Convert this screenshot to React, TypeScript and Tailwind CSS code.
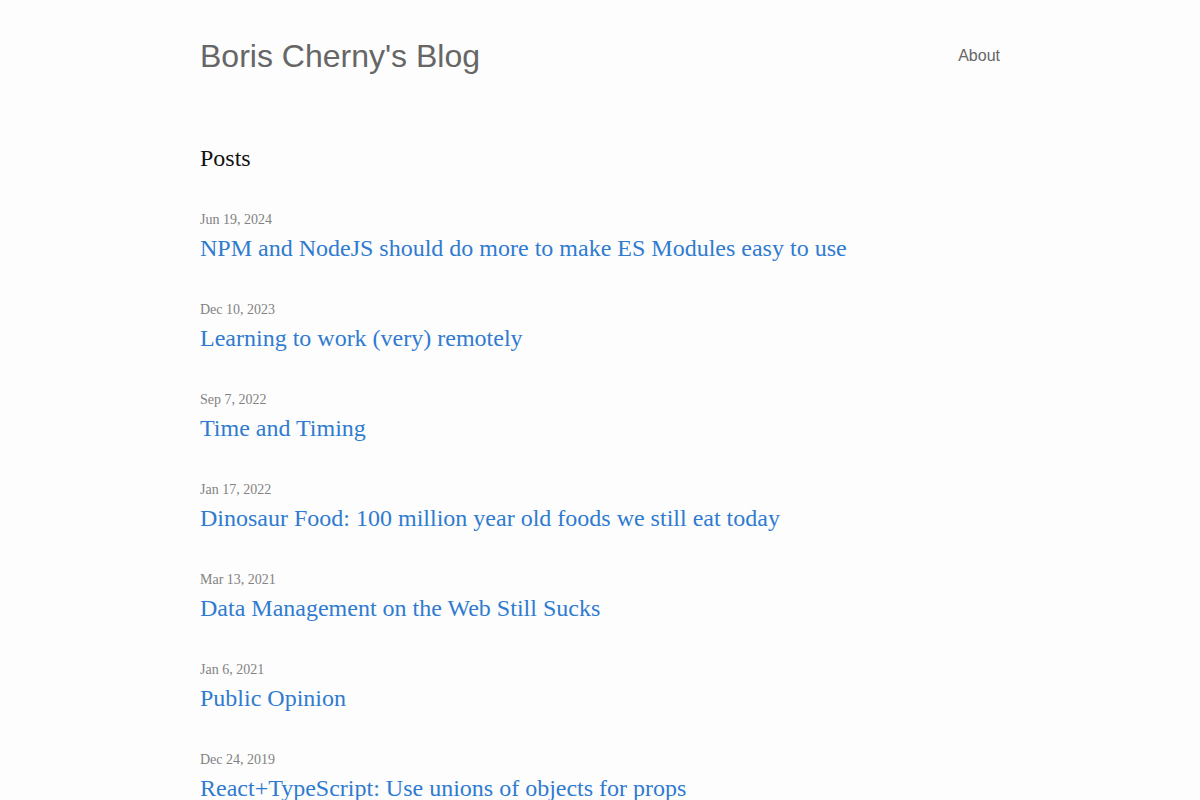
import React from "react";

const posts = [
  { date: "Jun 19, 2024", title: "NPM and NodeJS should do more to make ES Modules easy to use" },
  { date: "Dec 10, 2023", title: "Learning to work (very) remotely" },
  { date: "Sep 7, 2022", title: "Time and Timing" },
  { date: "Jan 17, 2022", title: "Dinosaur Food: 100 million year old foods we still eat today" },
  { date: "Mar 13, 2021", title: "Data Management on the Web Still Sucks" },
  { date: "Jan 6, 2021", title: "Public Opinion" },
  { date: "Dec 24, 2019", title: "React+TypeScript: Use unions of objects for props" },
  { date: "Oct 2, 2019", title: "Rethinking state management" },
];

const App = () => {
  return (
    <div className="bg-[#fdfdfd] min-h-screen font-['Liberation_Serif',serif]">
      <div className="w-[800px] mx-auto">
        {/* Header */}
        <header className="flex items-center justify-between pt-[36px] pb-[38px]">
          <h1 className="font-['Liberation_Sans',sans-serif] text-[32px] leading-[40px] text-[#666]">
            Boris Cherny's Blog
          </h1>
          <a className="font-['Liberation_Sans',sans-serif] text-base text-[#666]">About</a>
        </header>

        {/* Posts */}
        <h2 className="text-[24px] leading-[30px] text-[#111] mt-[29px] mb-[37px]">Posts</h2>
        <ul>
          {posts.map((p) => (
            <li key={p.date} className="h-[90px]">
              <div className="text-[14px] leading-[20px] text-[#828282]">{p.date}</div>
              <a className="block text-[24px] leading-[36px] text-[#2f7bd0]">{p.title}</a>
            </li>
          ))}
        </ul>
      </div>
    </div>
  );
};

export default App;
